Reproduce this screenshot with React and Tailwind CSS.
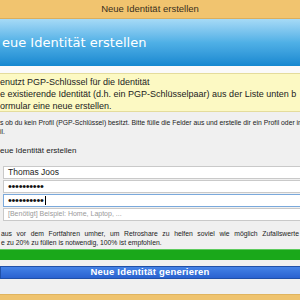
import React from 'react';

const sans = { fontFamily: '"Liberation Sans", Arial, sans-serif' };

const Field = ({ children, focused }) => (
  <div
    className={`ml-[3px] w-[320px] h-[13px] bg-white border flex items-center pl-[4px] text-[8.5px] text-[#222] ${
      focused ? 'border-[#7aa9dc]' : 'border-[#c9c9c9]'
    }`}
  >
    {children}
  </div>
);

const Dots = ({ caret }) => (
  <span className="flex items-center">
    <span className="text-[11px] leading-none tracking-[-0.3px] text-[#111]">••••••••••</span>
    {caret && <span className="ml-[1px] w-px h-[9px] bg-black" />}
  </span>
);

export default function App() {
  return (
    <div className="w-[300px] h-[300px] overflow-hidden bg-[#f0f0f0] flex flex-col" style={sans}>
      <div className="h-[19px] shrink-0 bg-[#f1c46f] border-b border-[#dcae5c] flex items-center justify-center text-[9.5px] text-[#3a3020]">
        Neue Identität erstellen
      </div>

      <div className="h-[47px] shrink-0 bg-gradient-to-b from-[#a6daf6] via-[#4fb0e6] to-[#1488d0] flex items-center pl-[2px]">
        <span className="text-white text-[13px] whitespace-nowrap" style={{ fontFamily: '"DejaVu Sans", Verdana, sans-serif' }}>
          eue Identität erstellen
        </span>
      </div>

      <div className="h-[7px] shrink-0 bg-[#fafafa]" />

      <div className="h-[39px] shrink-0 w-[320px] bg-[#fcf9c3] border-y border-[#e4dc9c] pt-[2px] text-[9px] leading-[12px] text-[#222] whitespace-nowrap">
        <div>enutzt PGP-Schlüssel für die Identität</div>
        <div>e existierende Identität (d.h. ein PGP-Schlüsselpaar) aus der Liste unten b</div>
        <div>ormular eine neue erstellen.</div>
      </div>

      <div className="mt-[6px] text-[6.8px] leading-[9px] text-[#222] whitespace-nowrap">
        <div>s ob du kein Profil (PGP-Schlüssel) besitzt. Bitte fülle die Felder aus und erstelle dir ein Profil oder imp</div>
        <div>il.</div>
      </div>

      <div className="mt-[10px] text-[8px] leading-[9px] text-[#222] whitespace-nowrap">eue Identität erstellen</div>

      <div className="mt-[11px] flex flex-col gap-[1px]">
        <Field>Thomas Joos</Field>
        <Field>
          <Dots />
        </Field>
        <Field focused>
          <Dots caret />
        </Field>
        <Field>
          <span className="text-[7px] text-[#9a9a9a]">[Benötigt] Beispiel: Home, Laptop, ...</span>
        </Field>
      </div>

      <div className="mt-[9px] pl-[1px] text-[6.8px] leading-[8.5px] text-[#222] whitespace-nowrap">
        <div className="flex justify-between w-[298px]">
          {'aus vor dem Fortfahren umher, um Retroshare zu helfen soviel wie möglich Zufallswerte'.split(' ').map((w, i) => (
            <span key={i}>{w}</span>
          ))}
        </div>
        <div>e zu 20% zu füllen is notwendig, 100% ist empfohlen.</div>
      </div>

      <div className="mt-[2px] h-[11px] shrink-0 w-[310px] bg-[#1aa81a] border-t border-[#5ccb5c]" />

      <div className="mt-[6px] h-[13px] shrink-0 w-[310px] bg-gradient-to-b from-[#4482e6] to-[#2a62d0] border border-[#2050a8] flex items-center justify-center pr-[10px]">
        <span className="text-white font-bold text-[9.5px] tracking-[0.2px]">Neue Identität generieren</span>
      </div>

      <div className="flex-1" />
      <div className="h-[6px] shrink-0 bg-[#efc36e] border-t border-[#e0b45e]" />
    </div>
  );
}
